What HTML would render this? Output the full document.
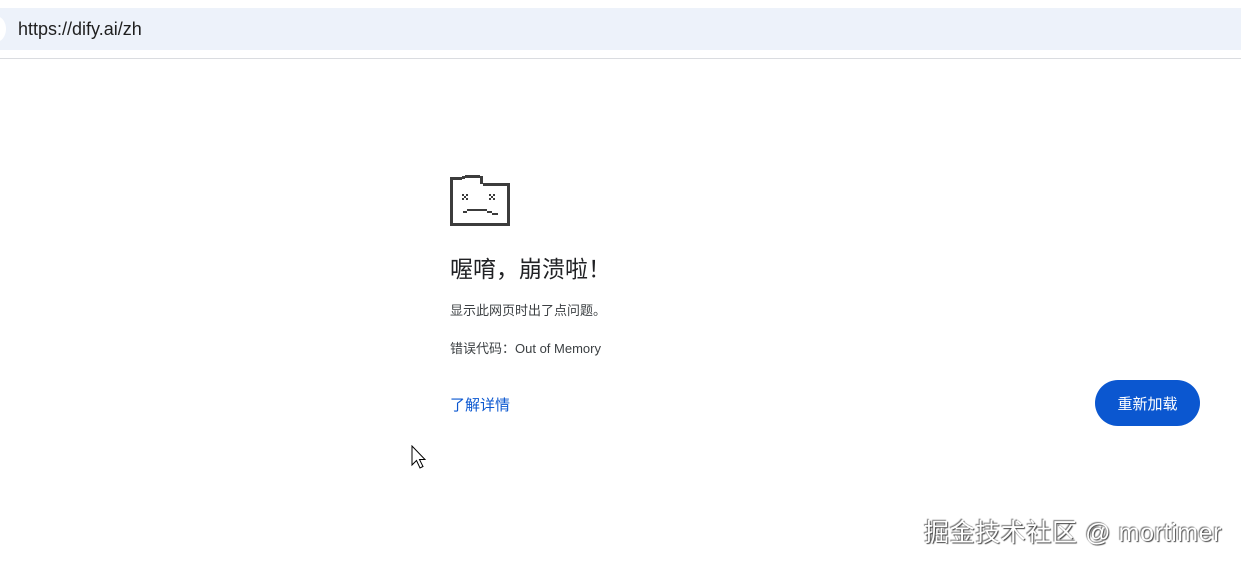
<!DOCTYPE html>
<html><head><meta charset="utf-8"><style>
body{margin:0;width:1241px;height:563px;background:#fff;position:relative;overflow:hidden;font-family:"Liberation Sans","Noto Sans CJK SC",sans-serif;}
.bar{position:absolute;left:0;top:8px;width:1241px;height:42px;background:#edf2fa;}
.circ{position:absolute;left:-14px;top:16px;width:20px;height:26px;border-radius:50%;background:#fff;}
.url{position:absolute;left:18px;top:19px;font-size:18px;color:#1f1f1f;}
.line{position:absolute;left:0;top:58px;width:1241px;height:1px;background:#dadce0;}
.t{position:absolute;left:450px;color:#202124;white-space:nowrap;}
.btn{position:absolute;left:1095px;top:380px;width:105px;height:46px;border-radius:23px;background:#0b57d0;color:#fff;font-size:15px;text-align:center;line-height:49px;}
.wm{position:absolute;left:924px;top:513px;font-size:25px;letter-spacing:0.6px;color:#fff;text-shadow:1px 1px 1px #444,-1px -1px 1px #777;white-space:nowrap;}
</style></head><body>
<div class="bar"></div><div class="circ"></div>
<div class="url">https://dify.ai/zh</div>
<div class="line"></div>
<svg style="position:absolute;left:450px;top:174px" width="62" height="54" fill="#3c3c3c">
<rect x="0" y="3" width="3" height="49"/>
<rect x="0" y="49" width="60" height="3"/>
<rect x="57" y="11" width="3" height="41"/>
<rect x="0" y="3" width="12" height="3"/>
<rect x="12" y="2" width="3" height="3"/>
<rect x="15" y="1" width="15" height="3"/>
<rect x="30" y="2" width="3" height="6"/>
<rect x="30" y="7" width="3" height="3"/>
<rect x="33" y="9" width="27" height="3"/>
<rect x="12" y="20" width="2" height="2"/><rect x="16" y="20" width="2" height="2"/><rect x="14" y="22" width="2" height="2"/><rect x="12" y="24" width="2" height="2"/><rect x="16" y="24" width="2" height="2"/>
<rect x="39" y="20" width="2" height="2"/><rect x="43" y="20" width="2" height="2"/><rect x="41" y="22" width="2" height="2"/><rect x="39" y="24" width="2" height="2"/><rect x="43" y="24" width="2" height="2"/>
<rect x="13" y="37" width="4" height="2"/><rect x="17" y="35" width="20" height="2"/><rect x="37" y="37" width="5" height="2"/><rect x="42" y="39" width="6" height="2"/>
</svg>
<div class="t" style="top:250px;font-size:23px">喔唷，崩溃啦！</div>
<div class="t" style="top:300px;font-size:13px;color:#3c4043">显示此网页时出了点问题。</div>
<div class="t" style="top:338px;font-size:13px;color:#3c4043">错误代码：Out of Memory</div>
<div class="t" style="top:394px;font-size:15px;color:#0b57d0">了解详情</div>
<div class="btn">重新加载</div>
<svg style="position:absolute;left:411px;top:445px" width="18" height="26"><path d="M1 1 L1 20 L5.5 15.5 L9 23 L12 21.5 L8.5 14.5 L14 14.5 Z" fill="#fff" stroke="#000" stroke-width="1"/></svg>
<div class="wm">掘金技术社区 @ mortimer</div>
</body></html>
